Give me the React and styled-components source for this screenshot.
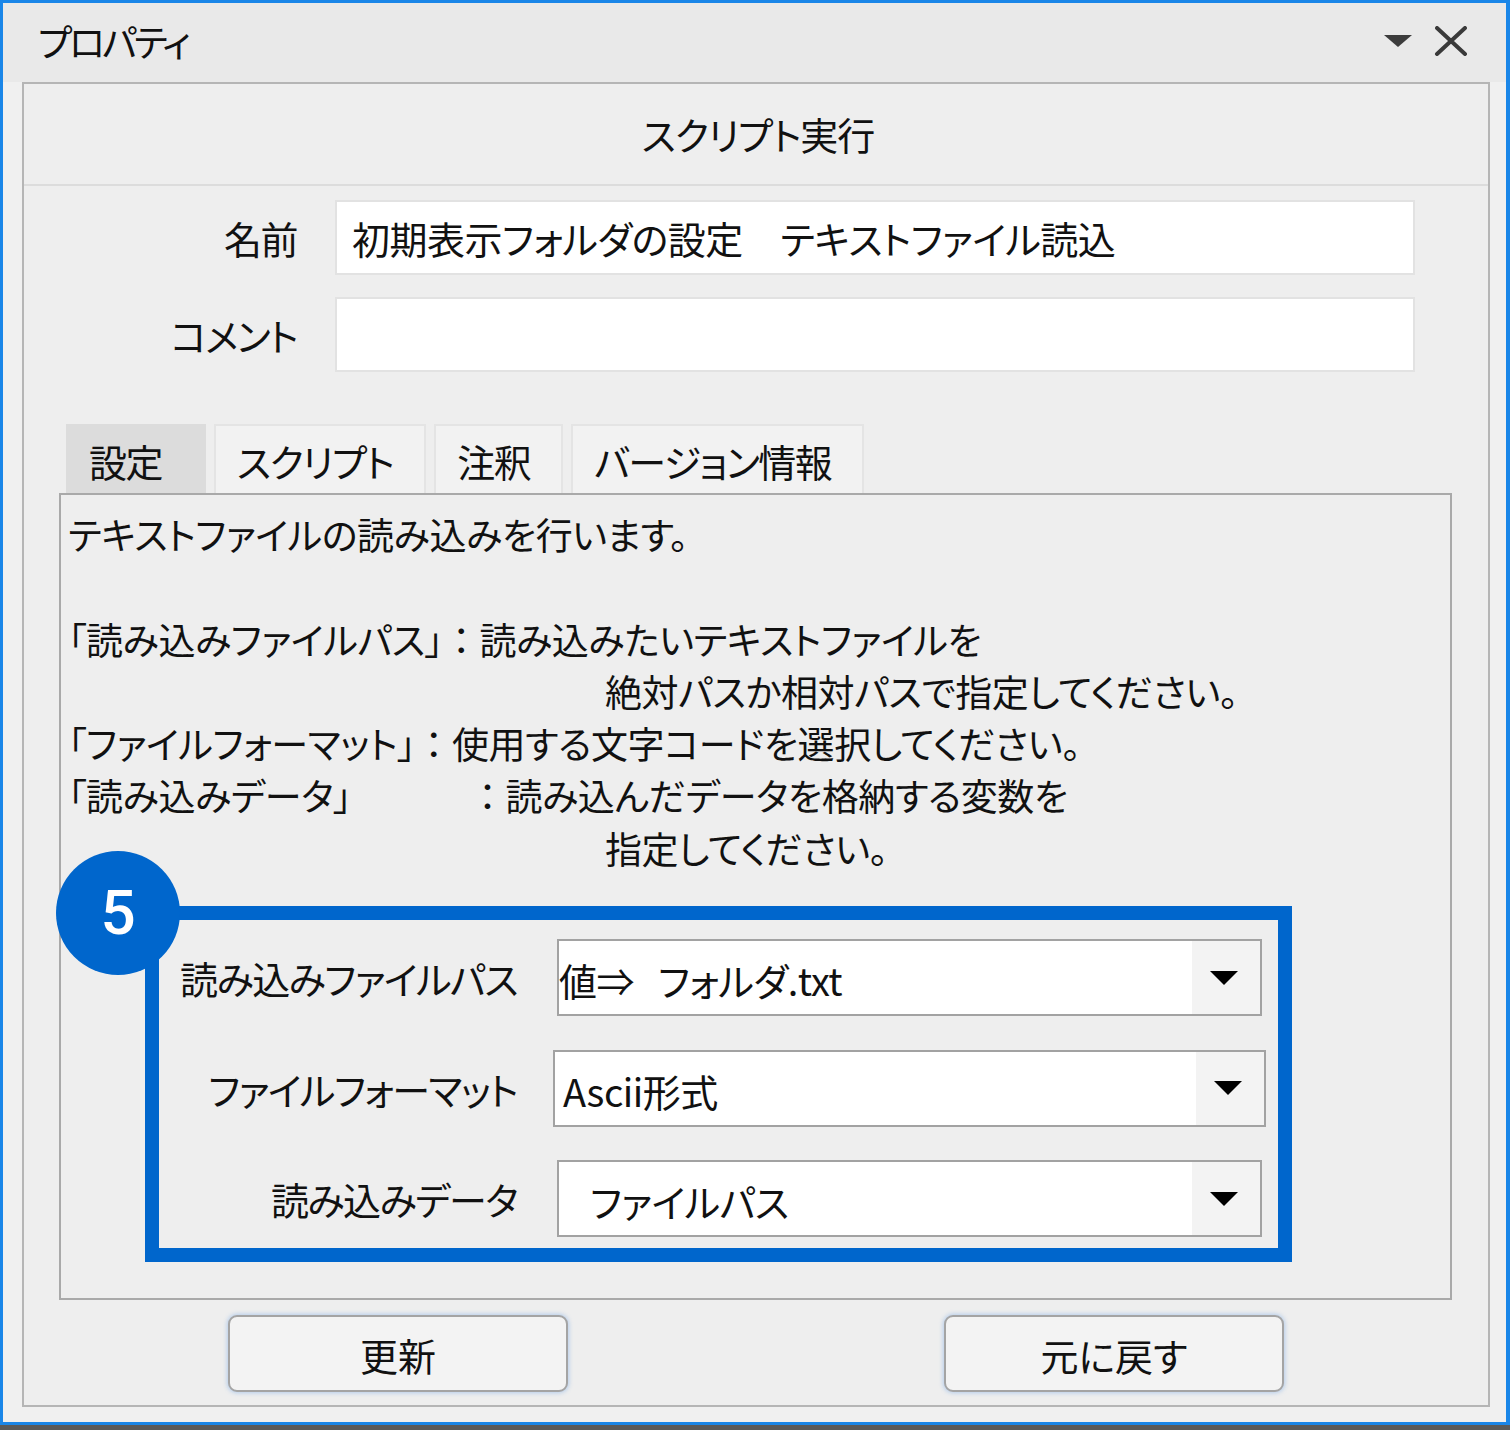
import React from "react";
import styled, { createGlobalStyle } from "styled-components";

const Global = createGlobalStyle`
  html, body { margin: 0; padding: 0; background: #5a5a5a; }
  body {
    font-family: "Noto Sans CJK JP", "Noto Sans", sans-serif;
    font-feature-settings: "palt";
    color: #111;
  }
  * { box-sizing: border-box; }
`;

const Frame = styled.div`
  width: 1510px;
  height: 1430px;
  background: #5a5a5a;
`;

const Window = styled.div`
  width: 1510px;
  height: 1425px;
  border: 3px solid #1a86e8;
  border-right-width: 4px;
  background: #f0f0f0;
  display: flex;
  flex-direction: column;
`;

const TitleBar = styled.div`
  height: 79px;
  flex: none;
  background: #e9e9e9;
  display: flex;
  align-items: center;
  padding: 0 38px 4px 35px;
`;

const Title = styled.div`
  font-size: 37px;
  flex: 1;
  letter-spacing: -3px;
`;

const TitleIcons = styled.div`
  display: flex;
  align-items: center;
  gap: 22px;
`;

const Body = styled.div`
  flex: 1;
  display: flex;
  padding: 0 16px 15px 19px;
`;

const Panel = styled.div`
  flex: 1;
  border: 2px solid #b5b5b5;
  background: #eeeeee;
  display: flex;
  flex-direction: column;
`;

const Header = styled.div`
  height: 102px;
  flex: none;
  border-bottom: 2px solid #dcdcdc;
  display: flex;
  align-items: center;
  justify-content: center;
  font-size: 38px;
  letter-spacing: -1px;
  padding-bottom: 2px;
  padding-left: 4px;
`;

const Form = styled.div`
  display: grid;
  grid-template-columns: 273px 1080px;
  column-gap: 38px;
  row-gap: 22px;
  margin-top: 14px;
`;

const Label = styled.div`
  display: flex;
  align-items: center;
  justify-content: flex-end;
  font-size: 38px;
  letter-spacing: -1.5px;
  white-space: nowrap;
`;

const TextInput = styled.div`
  height: 75px;
  background: #ffffff;
  border: 2px solid #e2e2e2;
  display: flex;
  align-items: center;
  padding-left: 15px;
  font-size: 38px;
  letter-spacing: -0.5px;
  white-space: pre;
`;

const Tabs = styled.div`
  display: flex;
  gap: 8px;
  margin: 52px 0 0 42px;
`;

const Tab = styled.div`
  height: 69px;
  display: flex;
  align-items: center;
  padding: 2px ${(p) => (p.$active ? 42 : 31)}px 0 21px;
  font-size: 38px;
  letter-spacing: -1.5px;
  background: ${(p) => (p.$active ? "#dcdcdc" : "#f2f2f2")};
  border: 2px solid ${(p) => (p.$active ? "#dcdcdc" : "#e4e4e4")};
  border-bottom: none;
`;

const TabPanel = styled.div`
  flex: 1;
  margin: 0 36px 0 35px;
  border: 2px solid #a9a9a9;
  display: flex;
  flex-direction: column;
  padding-top: 13px;
`;

const Description = styled.div`
  font-size: 37px;
  line-height: 52.3px;
  letter-spacing: -0.4px;
  padding-left: 7px;
`;

const Line = styled.div`
  height: 52.3px;
  white-space: pre;
  padding-left: ${(p) => p.$indent || 0}px;
`;

const Colon = styled.span`
  font-feature-settings: normal;
`;

const Highlight = styled.div`
  position: relative;
  margin: 32px 0 0 84px;
  width: 1147px;
  border: 14px solid #0066cc;
  padding: 19px 16px 11px 0;
  display: grid;
  grid-template-columns: 358px 705px;
  column-gap: 40px;
  row-gap: 33.5px;
`;

const Badge = styled.div`
  position: absolute;
  left: -103px;
  top: -69px;
  width: 124px;
  height: 124px;
  border-radius: 50%;
  background: #0066cc;
  color: #fff;
  font-family: Roboto, "Liberation Sans", sans-serif;
  font-weight: 500;
  font-size: 62px;
  display: flex;
  align-items: center;
  justify-content: center;
  padding-bottom: 2px;
`;

const Combo = styled.div`
  height: 77px;
  background: #fff;
  border: 2px solid #a2a2a2;
  display: flex;
  margin-left: ${(p) => p.$shift || 0}px;
  margin-right: ${(p) => p.$shift || 0}px;
`;

const ComboText = styled.div`
  flex: 1;
  display: flex;
  align-items: center;
  padding-left: ${(p) => p.$indent}px;
  padding-top: 4px;
  font-size: 38px;
  letter-spacing: -0.5px;
  white-space: pre;
  overflow: hidden;
`;

const ComboArrow = styled.div`
  width: 68px;
  background: #f3f3f3;
  display: flex;
  align-items: center;
  justify-content: center;
  padding-right: 4px;
`;

const Buttons = styled.div`
  display: flex;
  justify-content: space-between;
  padding: 0 204px;
  margin: 15px 0 13px;
`;

const Button = styled.div`
  width: 340px;
  height: 77px;
  border: 2px solid #a4a4a4;
  border-radius: 9px;
  background: #f3f3f3;
  box-shadow: 0 0 4px 1px rgba(110, 165, 230, 0.45);
  display: flex;
  align-items: center;
  justify-content: center;
  font-size: 38px;
  padding-top: 2px;
`;

const Caret = ({ color = "#000", w = 28, h = 14 }) => (
  <svg width={w} height={h} viewBox="0 0 28 14" preserveAspectRatio="none">
    <polygon points="0,0 28,0 14,14" fill={color} />
  </svg>
);

const CloseIcon = () => (
  <svg width="34" height="30" viewBox="0 0 34 30">
    <path d="M3 2 L31 28 M31 2 L3 28" stroke="#3a3a3a" strokeWidth="4" strokeLinecap="round" />
  </svg>
);

const fields = [
  { label: "読み込みファイルパス", value: "値⇒   フォルダ.txt", indent: 0, shift: 0 },
  { label: "ファイルフォーマット", value: "Ascii形式", indent: 8, shift: -4 },
  { label: "読み込みデータ", value: "ファイルパス", indent: 31, shift: 0 },
];

export default function App() {
  return (
    <Frame>
      <Global />
      <Window>
        <TitleBar>
          <Title>プロパティ</Title>
          <TitleIcons>
            <Caret color="#3c3c3c" w={28} h={12} />
            <CloseIcon />
          </TitleIcons>
        </TitleBar>
        <Body>
          <Panel>
            <Header>スクリプト実行</Header>
            <Form>
              <Label>名前</Label>
              <TextInput>初期表示フォルダの設定　テキストファイル読込</TextInput>
              <Label>コメント</Label>
              <TextInput />
            </Form>
            <Tabs>
              <Tab $active>設定</Tab>
              <Tab>スクリプト</Tab>
              <Tab>注釈</Tab>
              <Tab>バージョン情報</Tab>
            </Tabs>
            <TabPanel>
              <Description>
                <Line>テキストファイルの読み込みを行います。</Line>
                <Line> </Line>
                <Line>
                  「読み込みファイルパス」<Colon>：</Colon>読み込みたいテキストファイルを
                </Line>
                <Line $indent={537}>絶対パスか相対パスで指定してください。</Line>
                <Line>
                  「ファイルフォーマット」<Colon>：</Colon>使用する文字コードを選択してください。
                </Line>
                <Line>
                  「読み込みデータ」　　　 <Colon>：</Colon>読み込んだデータを格納する変数を
                </Line>
                <Line $indent={537}>指定してください。</Line>
              </Description>
              <Highlight>
                <Badge>5</Badge>
                {fields.map((f) => (
                  <React.Fragment key={f.label}>
                    <Label>{f.label}</Label>
                    <Combo $shift={f.shift}>
                      <ComboText $indent={f.indent}>{f.value}</ComboText>
                      <ComboArrow>
                        <Caret />
                      </ComboArrow>
                    </Combo>
                  </React.Fragment>
                ))}
              </Highlight>
            </TabPanel>
            <Buttons>
              <Button>更新</Button>
              <Button>元に戻す</Button>
            </Buttons>
          </Panel>
        </Body>
      </Window>
    </Frame>
  );
}
